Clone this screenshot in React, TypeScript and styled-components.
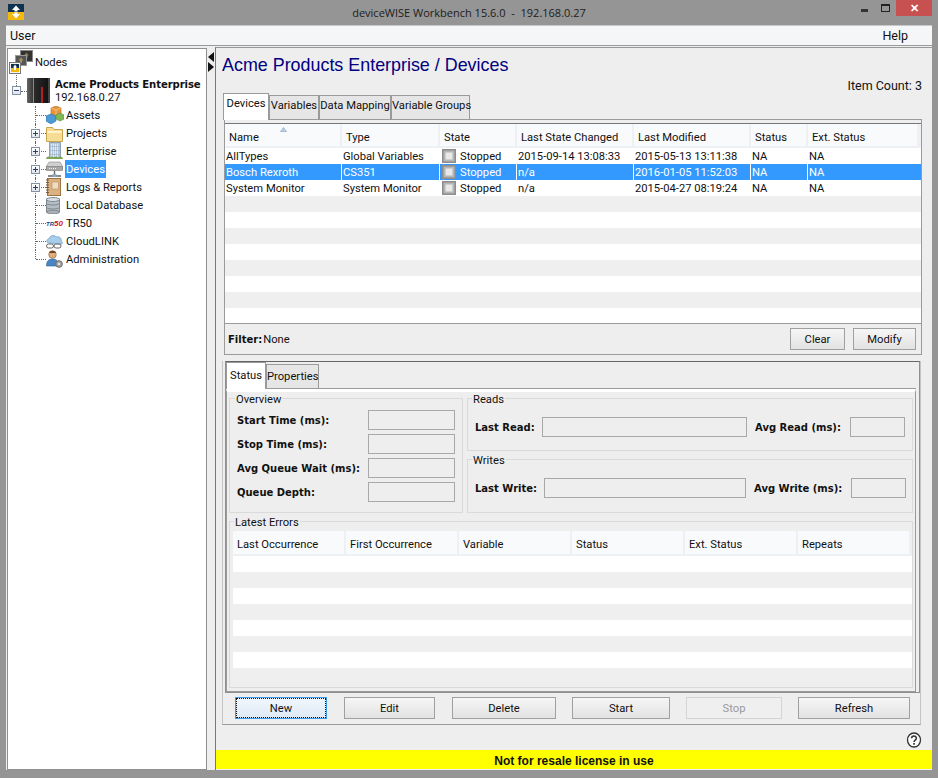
import { ReactNode } from "react"
import styled, { createGlobalStyle } from "styled-components"

const ui = `Roboto, "Liberation Sans", sans-serif`
const bold = `"DejaVu Sans", sans-serif`

const GlobalStyle = createGlobalStyle`
  html, body {
    margin: 0;
    padding: 0;
    background: #959595;
  }
  * {
    box-sizing: border-box;
  }
  body {
    font-family: ${ui};
    font-size: 11.2px;
    color: #111;
  }
`

const deviceColumns = "117px 98px 77px 117px 117px 57px 111px"
const errorColumns = "113px 113px 113px 113px 113px 113px"

const devices = [
  { name: "AllTypes", type: "Global Variables", changed: "2015-09-14 13:08:33", modified: "2015-05-13 13:11:38" },
  { name: "Bosch Rexroth", type: "CS351", changed: "n/a", modified: "2016-01-05 11:52:03", selected: true },
  { name: "System Monitor", type: "System Monitor", changed: "n/a", modified: "2015-04-27 08:19:24" },
]

const LogoIcon = ({ size = 16 }: { size?: number }) => (
  <svg width={size} height={size} viewBox="0 0 16 16">
    <rect width="16" height="8" fill="#10314f" />
    <rect y="8" width="16" height="8" fill="#f2b90f" />
    <path d="M8 1.500 12 6H9.500v1.500h-3V6H4z" fill="#fff" />
    <path d="M8 14.500 4 10h2.500V8.500h3V10H12z" fill="#fff" />
  </svg>
)

const NodesIcon = () => (
  <svg width="24" height="24" viewBox="0 0 24 24">
    <rect x="11.500" y="0.500" width="12" height="11" fill="#333" stroke="#888" />
    <path d="M17.500 2.500 20 5.500h-1.500V8h-2V5.500H15z" fill="#8a7a45" />
    <rect x="6.500" y="5.500" width="11" height="10" fill="#555" stroke="#999" />
    <path d="M12 7.500 14.500 10.500H13V13h-2v-2.500H9.500z" fill="#a5945a" />
    <rect x="0.500" y="12.500" width="11" height="11" fill="#f3f3f3" stroke="#777" />
    <rect x="2" y="18" width="8" height="4" fill="#f2b90f" />
    <rect x="2" y="14" width="8" height="4" fill="#10314f" />
    <path d="M6 14.500 8 17.500H7V20H5V17.500H4z" fill="#fff" />
  </svg>
)

const ServerIcon = () => (
  <svg width="24" height="26" viewBox="0 0 24 26">
    <defs>
      <linearGradient id="srv" x1="0" x2="1" y1="0" y2="0">
        <stop offset="0" stopColor="#666" />
        <stop offset="0.350" stopColor="#2a2a2a" />
        <stop offset="1" stopColor="#111" />
      </linearGradient>
    </defs>
    <rect x="0" y="0" width="22" height="25" rx="1" fill="url(#srv)" />
    <rect x="6" y="0" width="1" height="25" fill="#8a8a8a" />
    <rect x="14" y="9" width="2" height="16" fill="#b3201f" />
    <rect x="21" y="0" width="2" height="25" fill="#444" />
  </svg>
)

const AssetsIcon = () => (
  <svg width="18" height="18" viewBox="0 0 18 18">
    <path d="M5 2 10 0l5 2v6l-5 2-5-2z" fill="#e8953a" stroke="#b56a1e" strokeWidth="0.600" />
    <path d="M5 2l5 2 5-2M10 4v6" stroke="#f8d09a" strokeWidth="0.700" fill="none" />
    <path d="M0 10l5-2 5 2v5l-5 3-5-3z" fill="#4d9ad8" stroke="#2b6da6" strokeWidth="0.600" />
    <path d="M10 9l4-2 4 2v4l-4 2-4-2z" fill="#82b957" stroke="#5b8c37" strokeWidth="0.600" />
  </svg>
)

const FolderIcon = () => (
  <svg width="17" height="17" viewBox="0 0 17 17">
    <path d="M0.500 2.500h6l1.500 2h8.500v12h-16z" fill="#f7dc93" stroke="#c9a64e" />
    <path d="M1.500 6h14v2h-14z" fill="#fdf2c8" />
  </svg>
)

const BuildingIcon = () => (
  <svg width="17" height="18" viewBox="0 0 17 18">
    <rect x="3.500" y="0.500" width="11" height="15" fill="#b6c7da" stroke="#8fa2b8" />
    <path d="M5.500 2v13M7.500 2v13M9.500 2v13M11.500 2v13" stroke="#e2eaf3" />
    <path d="M4 4.500h10M4 8.500h10M4 12.500h10" stroke="#98abc0" strokeWidth="0.600" />
    <path d="M0 17c1-3 3-3 4-1 1-2 3-2 4 0 1-2 3-2 4 0 1-2 4-2 5 1z" fill="#79a64e" />
  </svg>
)

const DeviceIcon = () => (
  <svg width="17" height="17" viewBox="0 0 17 17">
    <path d="M3 1h11l3 5v2H0V6z" fill="#d0d0d0" stroke="#888" strokeWidth="0.600" />
    <rect x="0.500" y="5.500" width="16" height="4" fill="#a8a8a8" stroke="#777" strokeWidth="0.600" />
    <path d="M3 7.500h1M5 7.500h1M7 7.500h1M9 7.500h1" stroke="#eee" />
    <path d="M8.500 10v3M2 15h13" stroke="#666" strokeWidth="1.400" />
    <rect x="6.500" y="13" width="4" height="3" fill="#8aa9c4" />
  </svg>
)

const NotebookIcon = () => (
  <svg width="15" height="18" viewBox="0 0 15 18">
    <rect x="1.500" y="0.500" width="13" height="17" fill="#dcb182" stroke="#9e7342" />
    <rect x="6" y="4" width="6.500" height="7" fill="#f0dcc0" stroke="#b68f62" strokeWidth="0.600" />
    <path d="M0 2h3M0 4.500h3M0 7h3M0 9.500h3M0 12h3M0 14.500h3" stroke="#7a5a30" />
  </svg>
)

const DatabaseIcon = () => (
  <svg width="14" height="17" viewBox="0 0 14 17">
    <rect x="0.500" y="2" width="13" height="13" fill="#b5bcc4" stroke="#808890" />
    <ellipse cx="7" cy="2.500" rx="6.500" ry="2" fill="#d8dde2" stroke="#808890" />
    <path d="M0.500 6.500c2 2 11 2 13 0M0.500 10.500c2 2 11 2 13 0" stroke="#808890" fill="none" />
    <ellipse cx="7" cy="15" rx="6.500" ry="1.800" fill="#aab1b9" stroke="#808890" />
  </svg>
)

const CloudIcon = () => (
  <svg width="17" height="15" viewBox="0 0 17 15">
    <path d="M3 9C0 9 0 5 3 5c0-3 5-5 7-2 3-1 6 1 5 4 2 1 2 3 0 3z" fill="#a7cdea" stroke="#6b9cc4" strokeWidth="0.700" />
    <rect x="0.500" y="10" width="7" height="4" rx="2" fill="none" stroke="#666" />
    <rect x="8" y="10" width="7" height="4" rx="2" fill="none" stroke="#666" />
  </svg>
)

const AdminIcon = () => (
  <svg width="17" height="18" viewBox="0 0 17 18">
    <circle cx="6.500" cy="4.500" r="3.800" fill="#e0ad7e" stroke="#8c5e33" strokeWidth="0.600" />
    <path d="M3 3c1-3 6-3 7 0-2 0-5 0-7 0z" fill="#6e4423" />
    <path d="M0.500 16c0-5 2-7 6-7s6 2 6 7z" fill="#4a86c4" stroke="#2d5f94" strokeWidth="0.600" />
    <circle cx="13" cy="14" r="3.300" fill="#a8a8a8" stroke="#666" />
    <circle cx="13" cy="14" r="1.100" fill="#eee" />
  </svg>
)

const StateIcon = () => (
  <svg width="14" height="14" viewBox="0 0 14 14">
    <rect width="14" height="14" fill="#8d8d8d" />
    <rect x="1.500" y="1.500" width="11" height="11" fill="#b5b5b5" />
    <rect x="3.500" y="3.500" width="7" height="7" fill="#e8e8e8" />
  </svg>
)

const SortArrow = () => (
  <svg width="7" height="5" viewBox="0 0 7 5">
    <path d="M3.500 0.500 6.500 4.500h-6z" fill="#b8d0e8" stroke="#7f9db9" strokeWidth="0.600" />
  </svg>
)

const HelpIcon = () => (
  <svg width="16" height="16" viewBox="0 0 16 16">
    <ellipse cx="8" cy="8" rx="6.500" ry="7" fill="#fdfdfd" stroke="#333" strokeWidth="1.300" />
    <path d="M5.600 6.200c0-3 4.800-3 4.800 0 0 1.900-2.400 1.800-2.400 3.700" fill="none" stroke="#333" strokeWidth="1.500" />
    <rect x="7.200" y="11" width="1.700" height="1.700" fill="#333" />
  </svg>
)

const Window = styled.div`
  width: 938px;
  height: 778px;
  display: flex;
  flex-direction: column;
  background: #959595;
  overflow: hidden;
`

const TitleBar = styled.div`
  height: 25px;
  flex: none;
  display: grid;
  grid-template-columns: 1fr auto 1fr;
  padding: 0 6px;
  background: #959595;
`

const TitleLogo = styled.div`
  padding: 4px 0 0 2px;
  height: 22px;
`

const TitleText = styled.div`
  padding-top: 5px;
  font-family: "Open Sans", sans-serif;
  font-size: 11px;
  color: #1c1c1c;
  white-space: pre;
`

const WindowControls = styled.div`
  display: flex;
  justify-content: flex-end;
  align-items: flex-start;
`

const MinButton = styled.div`
  width: 7px;
  height: 3px;
  margin: 9px 13px 0 0;
  background: #333;
`

const MaxButton = styled.div`
  width: 9px;
  height: 8px;
  margin: 4px 6px 0 0;
  border: 1px solid #222;
  border-top-width: 2px;
`

const CloseButton = styled.div`
  width: 36px;
  height: 16px;
  display: flex;
  align-items: center;
  justify-content: center;
  background: #c75050;
  color: #fff;
  font-family: "Liberation Sans", sans-serif;
  font-size: 11px;
  font-weight: 700;
`

const MenuBar = styled.div`
  height: 21px;
  flex: none;
  margin: 0 6px;
  padding: 2px 24px 0 4px;
  display: flex;
  justify-content: space-between;
  background: #f5f6f7;
  border-top: 1px solid #c8c8c8;
  border-bottom: 1px solid #9a9a9a;
  font-size: 12.5px;
`

const Body = styled.div`
  height: 724px;
  flex: none;
  margin: 0 6px;
  padding-top: 1px;
  display: flex;
  background: #eeeeee;
`

const TreePanel = styled.div`
  width: 200px;
  flex: none;
  margin: 1px 0 0 1px;
  background: #fff;
  border: 1px solid #8f8f8f;
`

const NodesRow = styled.div`
  height: 26px;
  display: flex;
  align-items: center;
  gap: 2px;
  padding-left: 1px;
`

const RootRow = styled.div`
  position: relative;
  height: 31px;
  display: flex;
  align-items: center;
  padding-left: 4px;
  &::before {
    content: "";
    position: absolute;
    left: 8px;
    top: 0;
    height: 11px;
    border-left: 1px dotted #666;
  }
  &::after {
    content: "";
    position: absolute;
    left: 13px;
    top: 16px;
    width: 6px;
    border-top: 1px dotted #666;
  }
`

const ServerSlot = styled.span`
  display: flex;
  margin-left: 6px;
`

const RootLabel = styled.div`
  margin-left: 4px;
  line-height: 13px;
  white-space: nowrap;
  b {
    display: block;
    font-family: ${bold};
    font-size: 10.1px;
    letter-spacing: -0.1px;
  }
`

const Expander = styled.span<{ $open?: boolean }>`
  position: relative;
  width: 9px;
  height: 9px;
  flex: none;
  background: linear-gradient(#fff, #dfe4ea);
  border: 1px solid #8492a6;
  &::before {
    content: "";
    position: absolute;
    left: 1px;
    right: 1px;
    top: 3px;
    height: 1px;
    background: #2a3f70;
  }
  &::after {
    content: "";
    display: ${(p) => (p.$open ? "none" : "block")};
    position: absolute;
    top: 1px;
    bottom: 1px;
    left: 3px;
    width: 1px;
    background: #2a3f70;
  }
`

const TreeList = styled.div`
  display: flex;
  flex-direction: column;
`

const TreeRow = styled.div<{ $last?: boolean }>`
  position: relative;
  height: 18px;
  display: flex;
  align-items: center;
  padding-left: 23px;
  &::before {
    content: "";
    position: absolute;
    left: 27px;
    top: 0;
    height: ${(p) => (p.$last ? "9px" : "18px")};
    border-left: 1px dotted #666;
  }
  &::after {
    content: "";
    position: absolute;
    left: 28px;
    width: 10px;
    top: 9px;
    border-top: 1px dotted #666;
  }
`

const TreeGutter = styled.span`
  position: relative;
  z-index: 1;
  width: 15px;
  flex: none;
  display: flex;
  align-items: center;
`

const TreeIcon = styled.span`
  position: relative;
  z-index: 1;
  width: 19px;
  height: 18px;
  flex: none;
  display: flex;
  align-items: center;
  justify-content: flex-start;
  background: #fff;
`

const TreeLabel = styled.span<{ $selected?: boolean }>`
  position: relative;
  z-index: 1;
  height: 18px;
  line-height: 20px;
  padding: 0 1px;
  background: ${(p) => (p.$selected ? "#3399ff" : "transparent")};
  color: ${(p) => (p.$selected ? "#fff" : "#111")};
  white-space: nowrap;
`

const TrBadge = styled.span`
  font-family: "Liberation Sans", sans-serif;
  font-size: 8px;
  font-weight: 700;
  font-style: italic;
  color: #d3201f;
  white-space: nowrap;
  i {
    font-size: 6px;
    color: #24478f;
  }
`

const Splitter = styled.div`
  width: 8px;
  flex: none;
  padding-top: 5px;
  display: flex;
  flex-direction: column;
  align-items: center;
`

const SplitArrow = styled.span<{ $right?: boolean }>`
  width: 0;
  height: 0;
  border-top: 5px solid transparent;
  border-bottom: 5px solid transparent;
  ${(p) => (p.$right ? "border-left: 6px solid #111;" : "border-right: 6px solid #111;")}
`

const MainPanel = styled.div`
  flex: 1;
  min-width: 0;
  display: flex;
  flex-direction: column;
  border-left: 1px solid #777;
  border-top: 1px solid #999;
`

const PageTitle = styled.h1`
  height: 31px;
  margin: 0;
  padding: 5px 0 0 6px;
  font-family: "Liberation Sans", sans-serif;
  font-size: 17.9px;
  font-weight: 400;
  line-height: 24px;
  color: #000080;
`

const ItemCount = styled.div`
  height: 14px;
  padding-right: 10px;
  text-align: right;
  font-size: 12.5px;
  line-height: 14px;
`

const TabStrip = styled.div<{ $inset: number; $outdent: number }>`
  height: 27px;
  flex: none;
  display: flex;
  align-items: flex-end;
  margin: 0 ${(p) => p.$outdent}px 0 ${(p) => p.$inset}px;
  border-bottom: 1px solid #9a9a9a;
`

const Tab = styled.div<{ $active?: boolean; $width: number; $pad: number }>`
  position: relative;
  width: ${(p) => p.$width}px;
  height: ${(p) => (p.$active ? "27px" : "24px")};
  margin-bottom: ${(p) => (p.$active ? "-1px" : "0")};
  padding-top: ${(p) => p.$pad}px;
  text-align: center;
  white-space: nowrap;
  line-height: 18px;
  background: ${(p) => (p.$active ? "#fff" : "#e6e6e6")};
  border: 1px solid #9a9a9a;
  border-bottom: ${(p) => (p.$active ? "0" : "none")};
`

const DeviceBox = styled.div`
  height: 235px;
  flex: none;
  margin: 0 10px 6px 8px;
  display: flex;
  flex-direction: column;
  border: 1px solid #9a9a9a;
  border-top: 0;
  padding-top: 3px;
`

const GridHead = styled.div<{ $columns: string }>`
  height: 25px;
  flex: none;
  display: grid;
  grid-template-columns: ${(p) => p.$columns};
  background: #eef0f3;
  padding-bottom: 2px;
  border-top: 1px solid #777;
`

const HeadCell = styled.div`
  position: relative;
  margin-right: 2px;
  padding: 6px 0 0 4px;
  line-height: 16px;
  background: #f9fafc;
  white-space: nowrap;
`

const SortMark = styled.span`
  position: absolute;
  top: 2px;
  left: 55px;
  line-height: 5px;
`

const TableBody = styled.div`
  height: 175px;
  flex: none;
  background: #fff;
  overflow: hidden;
`

const BodyRow = styled.div<{ $columns: string; $selected?: boolean; $odd?: boolean }>`
  height: 16px;
  display: grid;
  grid-template-columns: ${(p) => p.$columns};
  grid-template-rows: 16px;
  line-height: 18px;
  white-space: nowrap;
  background: ${(p) => (p.$selected ? "#3399ff" : p.$odd ? "#efefef" : "#fff")};
  color: ${(p) => (p.$selected ? "#fff" : "#111")};
`

const BodyCell = styled.div<{ $selected?: boolean }>`
  padding-left: 1px;
  border-right: 1px solid ${(p) => (p.$selected ? "#fff" : "transparent")};
  overflow: hidden;
`

const StateCell = styled(BodyCell)`
  display: flex;
  align-items: flex-start;
  gap: 4px;
  padding-left: 2px;
  svg {
    margin-top: 1px;
  }
`

const FilterBar = styled.div`
  height: 32px;
  flex: none;
  display: flex;
  align-items: center;
  padding: 0 5px 0 3px;
  border-top: 1px solid #9a9a9a;
  border-bottom: 1px solid #9a9a9a;
`

const FilterLabel = styled.b`
  margin-right: 1px;
  font-family: ${bold};
  font-size: 10px;
`

const FilterValue = styled.span`
  flex: 1;
`

const Button = styled.button<{ $width: number; $focused?: boolean; $after?: number }>`
  width: ${(p) => p.$width}px;
  height: 22px;
  flex: none;
  padding: 0;
  margin-right: ${(p) => p.$after ?? 0}px;
  font: 11.2px ${ui};
  color: ${(p) => (p.disabled ? "#9a9a9a" : "#111")};
  background: ${(p) =>
    p.$focused ? "linear-gradient(#f0f6fc, #dfeaf6)" : p.disabled ? "#efefef" : "linear-gradient(#f6f6f6, #e2e2e2)"};
  border: 1px solid ${(p) => (p.$focused ? "#3d9ae8" : p.disabled ? "#d4d4d4" : "#a0a0a0")};
  outline: ${(p) => (p.$focused ? "1px dotted #111" : "none")};
  outline-offset: -2px;
`

const FilterButton = styled(Button)`
  margin-left: 8px;
`

const DetailBox = styled.div`
  flex: none;
  height: 364px;
  width: 699px;
  margin-left: 6px;
  display: flex;
  flex-direction: column;
  border: 1px solid #c4c4c4;
  border-top: 0;
  border-bottom-color: #9a9a9a;
`

const DetailFrame = styled.div`
  height: 332px;
  flex: none;
  margin-left: 2px;
  display: flex;
  flex-direction: column;
  border: 1px solid #8f8f8f;
  border-top-color: #666;
`

const TabBody = styled.div`
  flex: 1;
  min-height: 0;
  margin-right: 3px;
  padding-left: 2px;
  border-left: 1px solid #9a9a9a;
  border-right: 1px solid #9a9a9a;
  border-bottom: 1px solid #9a9a9a;
  border-top: 3px solid #fff;
  display: flex;
  flex-direction: column;
  gap: 2px;
`

const UpperRow = styled.div`
  height: 121px;
  flex: none;
  display: flex;
  gap: 4px;
`

const Group = styled.fieldset<{ $legend: number }>`
  min-width: 0;
  margin: 0;
  padding: 0;
  border: 1px solid #dadada;
  legend {
    height: 12px;
    margin-left: ${(p) => p.$legend}px;
    padding: 0 1px;
    line-height: 15px;
  }
`

const OverviewGroup = styled(Group)`
  width: 234px;
  flex: none;
  display: grid;
  grid-template-columns: 1fr 87px;
  grid-auto-rows: 20px;
  row-gap: 4px;
  align-content: start;
  padding: 6px 7px 0 7px;
`

const FieldLabel = styled.b`
  height: 20px;
  font-family: ${bold};
  font-size: 10px;
  line-height: 21px;
  white-space: nowrap;
`

const AvgLabel = styled(FieldLabel)`
  padding-left: 8px;
`

const Field = styled.div`
  height: 20px;
  border: 1px solid #a8a8a8;
  background: #eeeeee;
`

const RightStack = styled.div`
  flex: 1;
  min-width: 0;
  margin-right: 2px;
  display: flex;
  flex-direction: column;
  gap: 2px;
`

const ReadWriteGroup = styled(Group)<{ $height: number; $columns: string }>`
  height: ${(p) => p.$height}px;
  display: grid;
  grid-template-columns: ${(p) => p.$columns};
  align-content: start;
  padding: 13px 0 0 7px;
`

const ErrorsGroup = styled(Group)`
  height: 173px;
  flex: none;
  margin-right: 2px;
  padding: 4px 0 0 3px;
`

const ErrorHead = styled(GridHead)`
  width: 678px;
  border-top: 0;
  background: #eef0f3;
`

const ErrorRows = styled.div`
  width: 679px;
`

const ActionBar = styled.div`
  height: 31px;
  flex: none;
  display: flex;
  gap: 16px;
  align-items: flex-start;
  padding: 4px 10px 0 12px;
`

const HelpRow = styled.div`
  height: 25px;
  flex: none;
  display: flex;
  justify-content: flex-end;
  padding: 7px 10px 0 0;
`

const LicenseBar = styled.div`
  height: 19px;
  flex: none;
  text-align: center;
  font-family: "Liberation Sans", sans-serif;
  font-size: 12px;
  font-weight: 700;
  line-height: 22px;
  background: #ffff00;
  color: #111;
`

const Tree = ({ icon, label, expandable, selected, last }: {
  icon: ReactNode
  label: string
  expandable?: boolean
  selected?: boolean
  last?: boolean
}) => (
  <TreeRow $last={last}>
    <TreeGutter>{expandable && <Expander />}</TreeGutter>
    <TreeIcon>{icon}</TreeIcon>
    <TreeLabel $selected={selected}>{label}</TreeLabel>
  </TreeRow>
)

const App = () => {
  return (
    <Window>
      <GlobalStyle />
      <TitleBar>
        <TitleLogo>
          <LogoIcon />
        </TitleLogo>
        <TitleText>deviceWISE Workbench 15.6.0  -  192.168.0.27</TitleText>
        <WindowControls>
          <MinButton />
          <MaxButton />
          <CloseButton>✕</CloseButton>
        </WindowControls>
      </TitleBar>
      <MenuBar>
        <span>User</span>
        <span>Help</span>
      </MenuBar>
      <Body>
        <TreePanel>
          <NodesRow>
            <NodesIcon />
            <span>Nodes</span>
          </NodesRow>
          <RootRow>
            <Expander $open />
            <ServerSlot>
              <ServerIcon />
            </ServerSlot>
            <RootLabel>
              <b>Acme Products Enterprise</b>
              192.168.0.27
            </RootLabel>
          </RootRow>
          <TreeList>
            <Tree icon={<AssetsIcon />} label="Assets" />
            <Tree icon={<FolderIcon />} label="Projects" expandable />
            <Tree icon={<BuildingIcon />} label="Enterprise" expandable />
            <Tree icon={<DeviceIcon />} label="Devices" expandable selected />
            <Tree icon={<NotebookIcon />} label="Logs & Reports" expandable />
            <Tree icon={<DatabaseIcon />} label="Local Database" />
            <Tree icon={<TrBadge><i>TR</i>50</TrBadge>} label="TR50" />
            <Tree icon={<CloudIcon />} label="CloudLINK" />
            <Tree icon={<AdminIcon />} label="Administration" last />
          </TreeList>
        </TreePanel>
        <Splitter>
          <SplitArrow />
          <SplitArrow $right />
        </Splitter>
        <MainPanel>
          <PageTitle>Acme Products Enterprise / Devices</PageTitle>
          <ItemCount>Item Count: 3</ItemCount>
          <TabStrip $inset={7} $outdent={10}>
            <Tab $active $width={46} $pad={1}>Devices</Tab>
            <Tab $width={50} $pad={1}>Variables</Tab>
            <Tab $width={72} $pad={1}>Data Mapping</Tab>
            <Tab $width={79} $pad={1}>Variable Groups</Tab>
          </TabStrip>
          <DeviceBox>
            <GridHead $columns={deviceColumns}>
              <HeadCell>
                Name
                <SortMark><SortArrow /></SortMark>
              </HeadCell>
              <HeadCell>Type</HeadCell>
              <HeadCell>State</HeadCell>
              <HeadCell>Last State Changed</HeadCell>
              <HeadCell>Last Modified</HeadCell>
              <HeadCell>Status</HeadCell>
              <HeadCell>Ext. Status</HeadCell>
            </GridHead>
            <TableBody>
              {devices.map((d) => (
                <BodyRow key={d.name} $columns={deviceColumns} $selected={d.selected}>
                  <BodyCell $selected={d.selected}>{d.name}</BodyCell>
                  <BodyCell $selected={d.selected}>{d.type}</BodyCell>
                  <StateCell $selected={d.selected}>
                    <StateIcon />
                    Stopped
                  </StateCell>
                  <BodyCell $selected={d.selected}>{d.changed}</BodyCell>
                  <BodyCell $selected={d.selected}>{d.modified}</BodyCell>
                  <BodyCell $selected={d.selected}>NA</BodyCell>
                  <BodyCell>NA</BodyCell>
                </BodyRow>
              ))}
              {Array.from({ length: 7 }, (_, i) => (
                <BodyRow key={i} $columns={deviceColumns} $odd={i % 2 === 0} />
              ))}
            </TableBody>
            <FilterBar>
              <FilterLabel>Filter:</FilterLabel>
              <FilterValue>None</FilterValue>
              <FilterButton $width={55}>Clear</FilterButton>
              <FilterButton $width={63}>Modify</FilterButton>
            </FilterBar>
          </DeviceBox>
          <DetailBox>
            <DetailFrame>
              <TabStrip $inset={0} $outdent={3}>
                <Tab $active $width={40} $pad={4}>Status</Tab>
                <Tab $width={53} $pad={3}>Properties</Tab>
              </TabStrip>
              <TabBody>
                <UpperRow>
                  <OverviewGroup $legend={-2}>
                    <legend>Overview</legend>
                    <FieldLabel>Start Time (ms):</FieldLabel>
                    <Field />
                    <FieldLabel>Stop Time (ms):</FieldLabel>
                    <Field />
                    <FieldLabel>Avg Queue Wait (ms):</FieldLabel>
                    <Field />
                    <FieldLabel>Queue Depth:</FieldLabel>
                    <Field />
                  </OverviewGroup>
                  <RightStack>
                    <ReadWriteGroup $legend={-3} $height={59} $columns="67px 205px 103px 55px">
                      <legend>Reads</legend>
                      <FieldLabel>Last Read:</FieldLabel>
                      <Field />
                      <AvgLabel>Avg Read (ms):</AvgLabel>
                      <Field />
                    </ReadWriteGroup>
                    <ReadWriteGroup $legend={-3} $height={60} $columns="69px 202px 105px 55px">
                      <legend>Writes</legend>
                      <FieldLabel>Last Write:</FieldLabel>
                      <Field />
                      <AvgLabel>Avg Write (ms):</AvgLabel>
                      <Field />
                    </ReadWriteGroup>
                  </RightStack>
                </UpperRow>
                <ErrorsGroup $legend={1}>
                  <legend>Latest Errors</legend>
                  <ErrorHead $columns={errorColumns}>
                    <HeadCell>Last Occurrence</HeadCell>
                    <HeadCell>First Occurrence</HeadCell>
                    <HeadCell>Variable</HeadCell>
                    <HeadCell>Status</HeadCell>
                    <HeadCell>Ext. Status</HeadCell>
                    <HeadCell>Repeats</HeadCell>
                  </ErrorHead>
                  <ErrorRows>
                    {Array.from({ length: 8 }, (_, i) => (
                      <BodyRow key={i} $columns={errorColumns} $odd={i % 2 === 1} />
                    ))}
                  </ErrorRows>
                </ErrorsGroup>
              </TabBody>
            </DetailFrame>
            <ActionBar>
              <Button $width={92} $focused $after={1}>New</Button>
              <Button $width={91} $after={1}>Edit</Button>
              <Button $width={104}>Delete</Button>
              <Button $width={98}>Start</Button>
              <Button $width={96} disabled>Stop</Button>
              <Button $width={112}>Refresh</Button>
            </ActionBar>
          </DetailBox>
          <HelpRow>
            <HelpIcon />
          </HelpRow>
          <LicenseBar>Not for resale license in use</LicenseBar>
        </MainPanel>
      </Body>
    </Window>
  )
}

export default App
